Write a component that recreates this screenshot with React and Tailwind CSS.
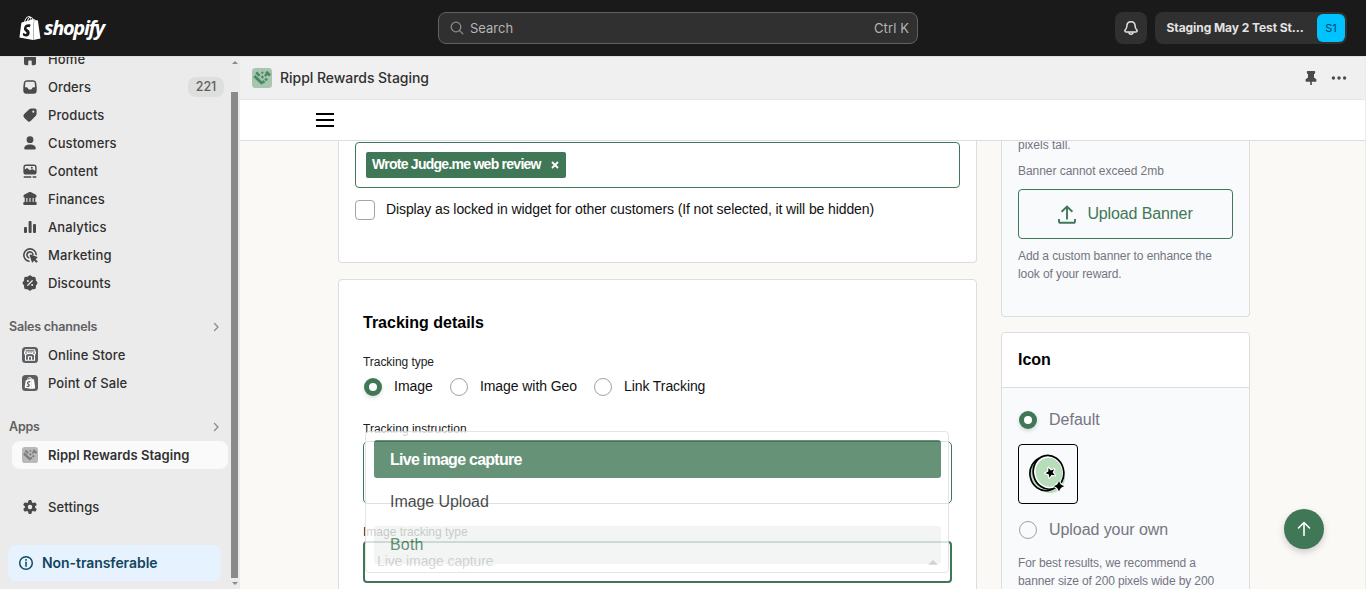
import React from 'react';
import { SiShopify } from 'react-icons/si';

const icons = {
  home: (
    <path d="M8.3 3.9a2.6 2.6 0 0 1 3.4 0l3.6 3.1c.5.4.7 1 .7 1.600V14.200a2 2 0 0 1-2 2h-1.500a.8.8 0 0 1-.8-.8V12.200a.7.7 0 0 0-.7-.7h-2a.7.7 0 0 0-.7.7v3.200a.8.8 0 0 1-.8.8H6a2 2 0 0 1-2-2V8.600c0-.6.200-1.200.7-1.600z" />
  ),
  orders: (
    <path fillRule="evenodd" d="M6.700 3.300h6.600a2.900 2.900 0 0 1 2.900 2.500l.5 4.200v3.700a3 3 0 0 1-3 3H6.300a3 3 0 0 1-3-3V10l.5-4.200a2.900 2.900 0 0 1 2.900-2.500zm0 1.500c-.7 0-1.300.5-1.400 1.200L4.900 10.300h1.700c.5 0 .9.300 1.100.7l.4.8c.2.400.6.700 1.100.7h1.600c.5 0 .9-.3 1.100-.7l.4-.8c.2-.4.600-.7 1.100-.7h1.700L14.700 6c-.1-.7-.7-1.200-1.400-1.200z" />
  ),
  products: (
    <path fillRule="evenodd" d="M11.300 3.500h3.400a1.900 1.900 0 0 1 1.900 1.900v3.200c0 .8-.3 1.500-.8 2.100l-4.900 5.100a2.500 2.500 0 0 1-3.600 0l-3.100-3.100a2.500 2.500 0 0 1 0-3.600l5-4.800c.6-.5 1.300-.8 2.100-.8zm2 4.200a1.050 1.050 0 1 0 0-2.100 1.050 1.050 0 0 0 0 2.100z" />
  ),
  customers: (
    <>
      <circle cx="10" cy="6.700" r="3.400" />
      <path d="M4.200 15.200c0-2.200 2.700-3.700 5.800-3.700s5.800 1.500 5.800 3.700c0 .8-.7 1.300-1.500 1.300H5.700c-.8 0-1.500-.5-1.500-1.300z" />
    </>
  ),
  content: (
    <>
      <path fillRule="evenodd" d="M6 3.500h8a2.600 2.600 0 0 1 2.600 2.600v4.800a2.600 2.600 0 0 1-2.600 2.600H6a2.600 2.600 0 0 1-2.600-2.600V6.100A2.600 2.600 0 0 1 6 3.500zm0 1.400c-.7 0-1.200.5-1.200 1.200v2.300l1.400-.9c.5-.4 1.200-.3 1.700.1l1.900 1.700 1.900-1c.4-.200.9-.200 1.300.1l2.200 1.400V6.100c0-.7-.5-1.200-1.200-1.200z" />
      <circle cx="11.800" cy="6.700" r="1" />
      <path d="M3.700 15.200h7.600v1.500H3.700zM12.600 15.200h3.700v1.500h-3.700z" />
    </>
  ),
  finances: (
    <path fillRule="evenodd" d="M9.300 3.100a1.700 1.700 0 0 1 1.400 0l4.800 2.300c.6.300 1 .8 1 1.500v.8c0 .5-.3.800-.8.800h-.4v4.400h.5c.5 0 .9.400.9.900v1.300c0 .5-.400.900-.9.900H4.200a.9.900 0 0 1-.9-.9v-1.300c0-.5.400-.9.900-.9h.5V8.500h-.4a.8.800 0 0 1-.8-.8v-.8c0-.7.4-1.200 1-1.500zM6.300 9v4h1.100V9zm3.150 0v4h1.100V9zm3.150 0v4h1.100V9z" />
  ),
  analytics: (
    <>
      <rect x="4" y="10" width="3" height="6" rx="1" />
      <rect x="8.600" y="4" width="3" height="12" rx="1" />
      <rect x="13" y="7" width="3" height="9" rx="1" />
    </>
  ),
  marketing: (
    <>
      <path d="M16.200 9.500A6.200 6.200 0 1 0 9 16.200" fill="none" stroke="currentColor" strokeWidth="1.600" strokeLinecap="round" />
      <path d="M13 9.500a3.050 3.050 0 1 0-4.300 3.200" fill="none" stroke="currentColor" strokeWidth="1.600" strokeLinecap="round" />
      <path d="M9.700 10.500c-.2-.6.3-1.100.9-.9l6.300 2.200c.7.200.7 1.100.1 1.400l-1.500.8 1.900 1.900c.3.300.3.700 0 1l-.5.500c-.3.300-.7.300-1 0L14 15.500l-.8 1.500c-.3.600-1.200.6-1.400-.1z" />
    </>
  ),
  discounts: (
    <>
      <path d="M8.500 3a2.100 2.100 0 0 1 3 0l.7.800h1.200a2.100 2.100 0 0 1 2.400 2.300v1.300l1 1.100a2.100 2.100 0 0 1 0 3l-.9 1v1.400a2.100 2.100 0 0 1-2.300 2.300h-1.300l-.9.900a2.100 2.100 0 0 1-3 0l-.8-.9H6.400a2.100 2.100 0 0 1-2.300-2.300v-1.300l-.9-1a2.100 2.100 0 0 1 0-3l.9-1V6.100a2.100 2.100 0 0 1 2.300-2.300h1.200z" />
      <path d="M7.800 12.200l4.400-4.400" stroke="#ebebeb" strokeWidth="1.300" strokeLinecap="round" />
      <circle cx="7.900" cy="8" r="1" fill="#ebebeb" />
      <circle cx="12.100" cy="12" r="1" fill="#ebebeb" />
    </>
  ),
  settings: (
    <path fillRule="evenodd" d="M8.300 3.200c.1-.5.500-.9 1.100-.9h1.200c.5 0 1 .4 1.100.9l.3 1.500.9.500 1.500-.5c.5-.200 1.100 0 1.400.5l.6 1c.3.500.2 1.100-.2 1.400l-1.200 1v1.200l1.200 1c.4.400.5 1 .2 1.400l-.6 1c-.3.500-.9.700-1.400.5l-1.500-.5-.9.500-.3 1.500c-.1.500-.6.900-1.100.9H9.400c-.6 0-1-.4-1.100-.9L8 13.700l-.9-.5-1.500.5c-.5.200-1.100 0-1.400-.5l-.6-1c-.3-.4-.2-1 .2-1.400l1.200-1V8.600l-1.200-1c-.4-.3-.5-.9-.2-1.400l.6-1c.3-.5.9-.7 1.400-.5l1.500.5.9-.5zM10 11.400a2.200 2.200 0 1 0 0-4.400 2.200 2.200 0 0 0 0 4.400z" transform="translate(0 .8)" />
  ),
  store: (
    <>
      <rect x="2" y="2" width="16" height="16" rx="3.500" fill="#5c5f62" />
      <path d="M5.500 4.700h9l1 3a1.500 1.500 0 0 1-3 .3 1.500 1.500 0 0 1-2.500 0 1.500 1.500 0 0 1-2.500 0 1.500 1.500 0 0 1-3-.3zM5.500 9.500v5.700h9V9.500M8.400 15v-3.300h3.200V15" fill="none" stroke="#fff" strokeWidth="1.100" />
      <path d="M4.800 7h10.400" stroke="#fff" strokeWidth="1" />
    </>
  ),
};

function Icon({ name }) {
  return (
    <svg viewBox="0 0 20 20" className="size-5 shrink-0 text-[#4a4a4a]" fill="currentColor">
      {icons[name]}
    </svg>
  );
}

function RipplMark({ className, bg, fg }) {
  return (
    <svg viewBox="0 0 20 20" className={className}>
      <rect width="20" height="20" rx="3.500" fill={bg} />
      <g fill="none" stroke={fg}>
        <path d="M2.300 8l8.200 7.800" strokeWidth="2.800" />
        <path d="M10.800 14.600l1.600-1.600" strokeWidth="2.600" />
        <path d="M13.200 12.400l1.800-1.800" strokeWidth="2.400" />
        <path d="M4.200 4.400l3.400 3.400" strokeWidth="2.600" />
        <path d="M14.200 3.800l3.800 3.800" strokeWidth="2.800" />
        <path d="M12.800 8l2.400-2.400" strokeWidth="2.200" />
      </g>
      <g fill={fg}>
        <rect x="9.300" y="3.700" width="2" height="2" transform="rotate(45 10.300 4.700)" />
        <rect x="9.200" y="7.900" width="2.400" height="2.400" transform="rotate(45 10.400 9.100)" />
      </g>
    </svg>
  );
}

function NavRow({ icon, label, badge }) {
  return (
    <div className="flex h-7 shrink-0 items-center gap-2 pl-5 pr-[7px]">
      {typeof icon === 'string' ? <Icon name={icon} /> : icon}
      <span className="grow pt-0.5 text-[13px] font-[550] tracking-[0.1px] text-[#303030]">{label}</span>
      {badge && (
        <span className="flex h-5 w-9 items-center justify-center rounded-lg bg-[#dedede] pt-px text-[12.500px] font-medium text-[#616161]">
          {badge}
        </span>
      )}
    </div>
  );
}

function NavHeading({ label }) {
  return (
    <div className="flex h-7 shrink-0 items-center justify-between pl-[9px] pr-[10px] text-[12.500px] font-semibold tracking-[-0.200px] text-[#616161]">
      <span className="pt-px">{label}</span>
      <svg viewBox="0 0 10 10" className="size-2.5" fill="none" stroke="#8a8a8a" strokeWidth="1.300" strokeLinecap="round" strokeLinejoin="round">
        <path d="M3.500 1.500L7 5 3.500 8.500" />
      </svg>
    </div>
  );
}

function Sidebar() {
  return (
    <aside className="flex w-60 shrink-0 overflow-hidden border-t border-[#dedede] bg-[#ebebeb]">
      <nav className="-mt-[12px] flex w-[231px] flex-col">
        <NavRow icon="home" label="Home" />
        <NavRow icon="orders" label="Orders" badge="221" />
        <NavRow icon="products" label="Products" />
        <NavRow icon="customers" label="Customers" />
        <NavRow icon="content" label="Content" />
        <NavRow icon="finances" label="Finances" />
        <NavRow icon="analytics" label="Analytics" />
        <NavRow icon="marketing" label="Marketing" />
        <NavRow icon="discounts" label="Discounts" />
        <div className="h-4 shrink-0" />
        <NavHeading label="Sales channels" />
        <NavRow icon="store" label="Online Store" />
        <NavRow
          icon={
            <span className="mx-0.5 flex size-4 items-center justify-center rounded-[3.500px] bg-[#5c5f62]">
              <SiShopify className="size-3 text-white" />
            </span>
          }
          label="Point of Sale"
        />
        <div className="h-4 shrink-0" />
        <NavHeading label="Apps" />
        <div className="ml-3 mr-[3px] flex h-7 shrink-0 items-center gap-2 rounded-lg bg-[#fafafa] pl-2">
          <RipplMark className="mx-0.5 size-4" bg="#b9b9b9" fg="#7c7c7c" />
          <span className="pt-0.5 text-[13px] font-semibold tracking-[0.040px] text-[#303030]">Rippl Rewards Staging</span>
        </div>
        <div className="h-6 shrink-0" />
        <NavRow icon="settings" label="Settings" />
        <div className="ml-2 mt-6 flex h-9 w-[213px] shrink-0 items-center gap-2 rounded-lg bg-[#e6f3ff] pl-2 text-[#0e4a63]">
          <svg viewBox="0 0 20 20" className="size-5" fill="none" stroke="currentColor" strokeWidth="1.500">
            <circle cx="10" cy="10" r="6.300" />
            <path d="M10 9.300v4" strokeLinecap="round" />
            <path d="M10 6.100v1.600" />
          </svg>
          <span className="-ml-0.5 pb-0.5 text-[14px] font-semibold tracking-[-0.060px] text-[#12455c]">Non-transferable</span>
        </div>
      </nav>
      <div className="flex w-[7px] flex-col items-center justify-between py-[4px]">
        <svg viewBox="0 0 6 3" className="h-[3px] w-1.5 shrink-0" fill="#8a8a8a"><path d="M0 3l3-3 3 3z" /></svg>
        <div className="mt-[23px] h-[486px] w-full shrink-0 bg-[#8a8a8a]" />
        <svg viewBox="0 0 6 3" className="h-[3px] w-1.5 shrink-0" fill="#8a8a8a"><path d="M0 0l3 3 3-3z" /></svg>
      </div>
    </aside>
  );
}

function TopBar() {
  return (
    <header className="flex h-14 shrink-0 items-center bg-[#1a1a1a]">
      <div className="flex w-[438px] items-center pl-[18px] text-white">
        <SiShopify className="size-6" />
        <span className="ml-[2px] font-['Open_Sans',sans-serif] text-[20px] font-bold italic leading-6 tracking-[-1.300px]">shopify</span>
      </div>
      <div className="flex h-8 w-[480px] items-center rounded-lg border border-[#616161] bg-[#303030] pl-[11px] pr-2 text-[#b5b5b5]">
        <svg viewBox="0 0 14 14" className="size-3.5 text-[#8a8a8a]" fill="none" stroke="currentColor" strokeWidth="1.300" strokeLinecap="round">
          <circle cx="6" cy="6" r="4.800" />
          <path d="M9.600 9.600l3.200 3.200" />
        </svg>
        <span className="ml-[6px] grow pt-0.5 text-[13px]">Search</span>
        <span className="pt-0.5 text-[13px] tracking-[0.100px]">Ctrl K</span>
      </div>
      <div className="ml-auto mr-[19px] flex gap-2">
        <div className="flex size-8 items-center justify-center rounded-lg bg-[#303030]">
          <svg viewBox="0 0 20 20" className="size-5" fill="none" stroke="#e3e3e3" strokeWidth="1.500" strokeLinejoin="round">
            <path d="M10 3.700c-2.400 0-4 1.800-4.100 4.100-.1 2.400-.6 3.200-1.600 4.100-.9.900-.4 2 .7 2h10c1.100 0 1.600-1.100.7-2-1-.9-1.500-1.700-1.600-4.100-.1-2.300-1.700-4.100-4.100-4.100z" />
            <path d="M8 14.200a2 2 0 0 0 4 0" />
          </svg>
        </div>
        <div className="flex h-8 w-48 items-center justify-between rounded-lg bg-[#303030] pl-[11.500px] pr-[2px]">
          <span className="whitespace-nowrap text-[12px] font-bold tracking-[-0.070px] text-[#e3e3e3]">Staging May 2 Test St...</span>
          <span className="flex size-7 items-center justify-center rounded-md bg-[#00c2ff] text-[11px] text-[#00405c]">S1</span>
        </div>
      </div>
    </header>
  );
}

function Radio({ checked }) {
  return checked ? (
    <span className="flex size-[18px] shrink-0 items-center justify-center rounded-full bg-[#407757] shadow-[0_2px_4px_rgba(0,0,0,0.15)]">
      <span className="size-2 rounded-full bg-white" />
    </span>
  ) : (
    <span className="size-[18px] shrink-0 rounded-full border border-[#a0a0a8]" />
  );
}

function SelectMenu() {
  return (
    <div className="absolute left-[26px] top-[151px] flex h-[142px] w-[584px] flex-col gap-[5px] rounded border border-[#dedede] bg-white pl-2 pr-[7px] pt-2 text-[16px] opacity-80">
      <div className="flex h-[38px] items-center rounded-[3px] bg-[#407757] pl-4 pt-0.5 font-bold tracking-[-0.740px] text-white">Live image capture</div>
      <div className="flex h-[38px] items-center rounded-[3px] pl-4 tracking-[-0.070px] text-[#1f1f1f]">Image Upload</div>
      <div className="flex h-[38px] items-center rounded-[3px] bg-[#eff3f1] pl-4 tracking-[0.200px] text-[#407757]">Both</div>
    </div>
  );
}

function Coin() {
  return (
    <svg viewBox="0 0 40 40" className="size-10">
      <ellipse cx="22" cy="23" rx="15" ry="16" fill="#b7ddba" />
      <ellipse cx="17.300" cy="20" rx="15.300" ry="16.800" fill="#b7ddba" stroke="#000" strokeWidth="1.700" transform="rotate(-12 17.300 20)" />
      <ellipse cx="20.500" cy="18.300" rx="15.200" ry="17" fill="#fff" stroke="#000" strokeWidth="1.700" transform="rotate(-14 20.500 18.300)" />
      <ellipse cx="20.900" cy="18.300" rx="13.200" ry="14.600" fill="#b7ddba" transform="rotate(-14 20.900 18.300)" />
      <path d="M20.500 14l2.400 2.400 3.200-1.100-1.400 3.200 2.100 2.700-3.400-.4-1.900 2.900-.8-3.400-3.300-1 2.900-1.800z" fill="#000" stroke="#fff" strokeWidth="2.400" paintOrder="stroke" strokeLinejoin="round" />
      <path d="M31 28.300l3.900 3.900-3.900 3.900-3.900-3.900z" fill="#f8fafc" stroke="#f8fafc" strokeWidth="2.500" />
      <path d="M31 28.700q1 2.500 3.500 3.500-2.500 1-3.500 3.500-1-2.500-3.500-3.500 2.500-1 3.500-3.500z" fill="#000" stroke="#000" strokeWidth="1.300" />
    </svg>
  );
}

function FormColumn() {
  return (
    <div className="flex w-[639px] flex-col gap-4">
      <section className="flex h-[122px] shrink-0 flex-col rounded-b border border-t-0 border-[#dcdde0] bg-white pl-4 pt-px">
        <div className="flex h-[46px] w-[605px] shrink-0 items-center rounded border border-[#407757] pl-2.5">
          <div className="flex h-[26px] w-[200px] items-center justify-between rounded-[2px] bg-[#407757] pl-1.5 pr-[7px] text-white">
            <span className="pb-0.5 text-[14px] font-bold tracking-[-0.740px]">Wrote Judge.me web review</span>
            <svg viewBox="0 0 8 8" className="size-2" stroke="#fff" strokeWidth="1.800"><path d="M1 1l6 6M7 1L1 7" /></svg>
          </div>
        </div>
        <div className="mt-[11px] flex items-center">
          <span className="mt-px size-5 rounded border border-[#a3a3ad]" />
          <span className="ml-[11px] pb-0.5 text-[14px] leading-[18px] tracking-[-0.100px] text-[#111]">Display as locked in widget for other customers (If not selected, it will be hidden)</span>
        </div>
      </section>
      <section className="relative h-[330px] shrink-0 rounded-t border border-[#dcdde0] bg-white px-6">
        <h2 className="mt-[33px] text-[16px] font-bold leading-5 text-black">Tracking details</h2>
        <div className="mt-[21px] text-[12px] leading-4 tracking-[-0.050px] text-[#222]">Tracking type</div>
        <div className="mt-[7px] flex h-5 items-center text-[14px] text-[#111]">
          <span className="ml-px flex items-center gap-3"><Radio checked /><span className="pb-0.5">Image</span></span>
          <span className="ml-[17px] flex items-center gap-3"><Radio /><span className="pb-0.5 tracking-[-0.070px]">Image with Geo</span></span>
          <span className="ml-[17px] flex items-center gap-3"><Radio /><span className="pb-0.5 tracking-[-0.090px]">Link Tracking</span></span>
        </div>
        <div className="mt-6 text-[12px] leading-4 text-[#222]">Tracking instruction</div>
        <div className="mt-1 h-[63px] w-[589px] rounded-[5px] border border-[#407757]" />
        <div className="mt-5 text-[12px] leading-4 text-[#222]">Image tracking type</div>
        <div className="mt-px flex h-[42px] w-[589px] items-center justify-between rounded-[4px] border-2 border-[#407757] pl-3 text-[14px] text-[#444]">
          <span className="pb-0.5 tracking-[-0.100px]">Live image capture</span>
          <svg viewBox="0 0 10 5" className="mr-3 h-[5px] w-2.5" fill="#555"><path d="M0 5l5-5 5 5z" /></svg>
        </div>
        <SelectMenu />
      </section>
    </div>
  );
}

function SideColumn() {
  return (
    <div className="flex w-[249px] flex-col text-[#757580]">
      <section className="flex h-[176px] shrink-0 flex-col rounded-b border border-t-0 border-[#dcdde0] bg-[#f8fafc] px-4 text-[12px] leading-[18px]">
        <p className="mt-[-5px]">pixels tall.</p>
        <p className="mt-2 tracking-[-0.040px]">Banner cannot exceed 2mb</p>
        <div className="mt-[9px] flex h-[50px] shrink-0 items-center justify-center gap-[11px] rounded border border-[#407757] text-[16px] text-[#407757]">
          <svg viewBox="0 0 18 19" className="h-[19px] w-[18px]" fill="none" stroke="currentColor" strokeWidth="1.900">
            <path d="M9 14.500V2M3.600 6.800L9 1.600l5.400 5.200M1 14v2.200a1.600 1.600 0 0 0 1.600 1.600h12.800a1.600 1.600 0 0 0 1.600-1.600V14" />
          </svg>
          <span className="tracking-[-0.120px]">Upload Banner</span>
        </div>
        <p className="mt-2 whitespace-nowrap tracking-[-0.090px]">Add a custom banner to enhance the<br />look of your reward.</p>
      </section>
      <section className="mt-[15px] flex flex-col rounded-t border border-[#dcdde0] bg-[#f8fafc]">
        <h2 className="flex h-[55px] items-center rounded-t border-b border-[#dcdde0] bg-white px-4 text-[16px] font-bold text-black">Icon</h2>
        <div className="flex flex-col px-4">
          <div className="ml-px mt-[22px] flex h-5 items-center gap-3 text-[16px]"><Radio checked /><span>Default</span></div>
          <div className="mt-[14px] flex size-[60px] items-center justify-center rounded border border-black"><Coin /></div>
          <div className="ml-px mt-4 flex h-5 items-center gap-3 text-[16px]"><Radio /><span className="tracking-[-0.070px]">Upload your own</span></div>
          <p className="mt-[14px] whitespace-nowrap text-[12px] leading-[18px] tracking-[-0.110px]">For best results, we recommend a<br />banner size of 200 pixels wide by 200</p>
        </div>
      </section>
    </div>
  );
}

export default function App() {
  return (
    <div className="flex h-[589px] w-[1366px] flex-col overflow-hidden font-[Inter,sans-serif]">
      <TopBar />
      <div className="flex min-h-0 grow">
        <Sidebar />
        <main className="relative flex w-[1126px] flex-col border-r border-[#ebebeb] bg-[#faf9f5]">
          <div className="flex h-11 shrink-0 items-center border-b border-t border-b-[#e6e6e6] border-t-[#e0e0e0] bg-[#f0f0f0] pl-3 pr-[18px]">
            <RipplMark className="size-5" bg="#a8c5ae" fg="#4a8663" />
            <span className="ml-2 grow pb-0.5 text-[14px] font-[450] tracking-[-0.040px] text-[#303030]">Rippl Rewards Staging</span>
            <svg viewBox="0 0 12 16" className="mr-[14px] h-4 w-3" fill="#4a4a4a">
              <path d="M2.500 1h7a.6.600 0 0 1 .6.600v1.600a.6.600 0 0 1-.6.600H9v3.600l2 1.600a1 1 0 0 1 .4.800V11a.7.700 0 0 1-.7.700H6.800V15H5.200v-3.300H1.300A.7.700 0 0 1 .6 11V9.800a1 1 0 0 1 .4-.8l2-1.600V3.800h-.5a.6.600 0 0 1-.6-.6V1.600A.6.600 0 0 1 2.500 1z" />
            </svg>
            <svg viewBox="0 0 16 4" className="h-1 w-4" fill="#4a4a4a">
              <circle cx="2.400" cy="2" r="1.700" /><circle cx="8" cy="2" r="1.700" /><circle cx="13.600" cy="2" r="1.700" />
            </svg>
          </div>
          <div className="flex h-[41px] shrink-0 items-center border-b border-[#dcdde0] bg-white pl-[76px]">
            <div className="flex flex-col gap-1">
              <span className="h-0.5 w-[18px] bg-black" />
              <span className="h-0.5 w-[18px] bg-black" />
              <span className="h-0.5 w-[18px] bg-black" />
            </div>
          </div>
          <div className="flex min-h-0 grow items-start gap-6 overflow-hidden pl-[98px] font-['Liberation_Sans',Arial,sans-serif]">
            <FormColumn />
            <SideColumn />
          </div>
          <button className="absolute bottom-10 right-[41px] flex size-10 items-center justify-center rounded-full bg-[#407757] shadow-[0_3px_7px_rgba(0,0,0,0.18)]">
            <svg viewBox="0 0 16 16" className="size-4" fill="none" stroke="#fff" strokeWidth="1.600" strokeLinecap="round" strokeLinejoin="round">
              <path d="M8 14.500V1.500M2.500 7L8 1.500 13.500 7" />
            </svg>
          </button>
        </main>
      </div>
    </div>
  );
}
